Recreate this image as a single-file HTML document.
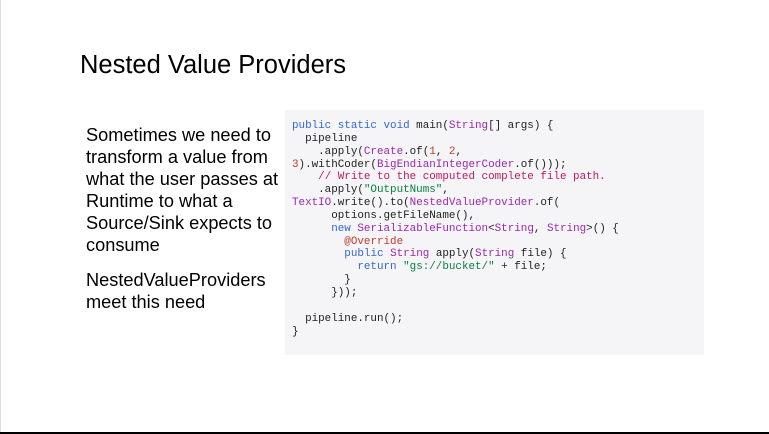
<!DOCTYPE html>
<html><head><style>
body{margin:0;width:769px;height:434px;background:#fff;position:relative;overflow:hidden;font-family:"Liberation Sans",sans-serif}
.lb{position:absolute;left:0;top:0;width:1px;height:434px;background:#ddd}
.bb{position:absolute;left:0;top:432px;width:769px;height:2px;background:#000}
h1{position:absolute;left:80px;top:51px;margin:0;font-size:25.5px;font-weight:normal;color:#000}
.t{position:absolute;left:86px;top:124px;font-size:18.2px;line-height:22px;color:#000;width:210px}
.code{position:absolute;left:285px;top:110px;width:419px;height:245px;background:#f5f5f7}
pre{margin:0;position:absolute;left:7px;top:10px;font-family:"Liberation Mono",monospace;font-size:10.9px;line-height:12.85px;color:#222}
.k{color:#3367d6}.c{color:#9c27b0}.n{color:#c53929}.s{color:#0b8043}.m{color:#c2185b}.a{color:#c53929}
</style></head><body>
<div class="lb"></div>
<h1>Nested Value Providers</h1>
<div class="t">Sometimes we need to transform a value from what the user passes at Runtime to what a Source/Sink expects to consume<br><div style="height:13px"></div>NestedValueProviders meet this need</div>
<div class="code"><pre><span class="k">public static void</span> main(<span class="c">String</span>[] args) {
  pipeline
    .apply(<span class="c">Create</span>.of(<span class="n">1</span>, <span class="n">2</span>,
<span class="n">3</span>).withCoder(<span class="c">BigEndianIntegerCoder</span>.of()));
    <span class="m">// Write to the computed complete file path.</span>
    .apply(<span class="s">"OutputNums"</span>,
<span class="c">TextIO</span>.write().to(<span class="c">NestedValueProvider</span>.of(
      options.getFileName(),
      <span class="k">new</span> <span class="c">SerializableFunction</span>&lt;<span class="c">String</span>, <span class="c">String</span>&gt;() {
        <span class="a">@Override</span>
        <span class="k">public</span> <span class="c">String</span> apply(<span class="c">String</span> file) {
          <span class="k">return</span> <span class="s">"gs://bucket/"</span> + file;
        }
      }));

  pipeline.run();
}</pre></div>
<div class="bb"></div>
</body></html>
